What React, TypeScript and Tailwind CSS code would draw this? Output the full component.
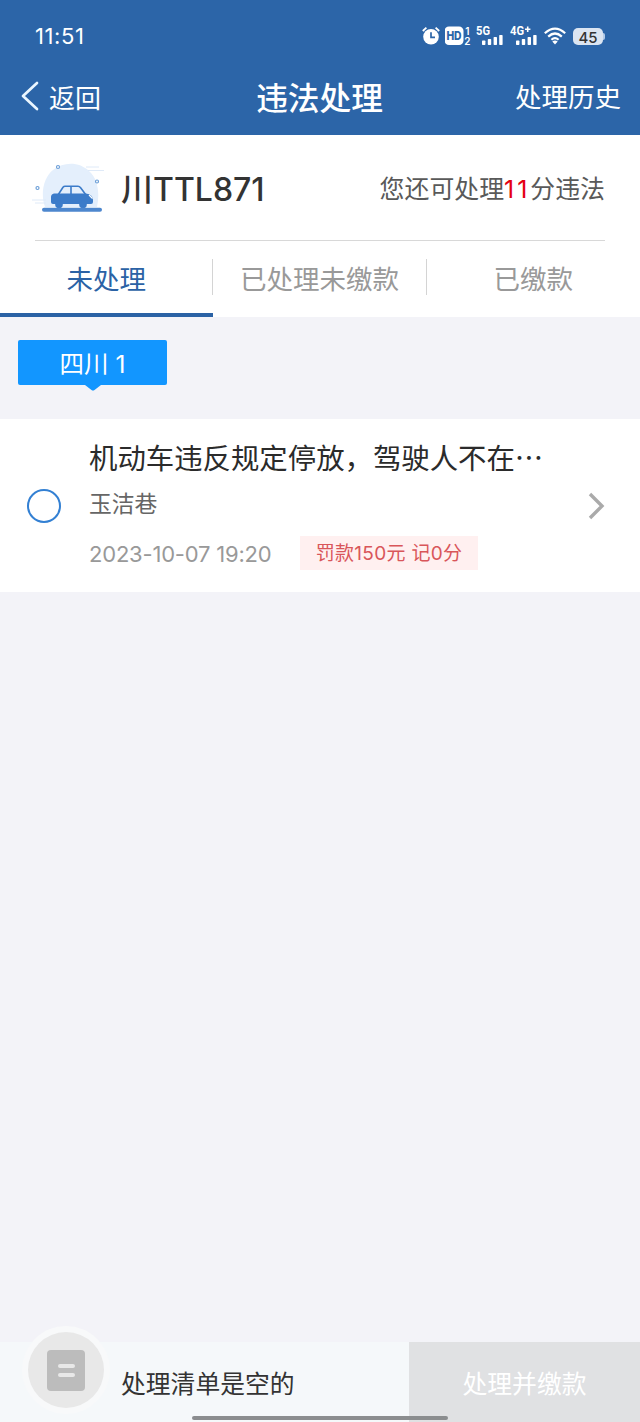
const TABS = [
    { key: "pending", label: "未处理" },
    { key: "unpaid", label: "已处理未缴款" },
    { key: "paid", label: "已缴款" },
]

const SignalIcon = ({ label, plus }: { label: string, plus?: boolean }) => (
    <svg width="28" height="22" viewBox="0 0 28 22" fill="white">
        <text x="0" y="10" fontSize="12" fontWeight="700" textLength="14" lengthAdjust="spacingAndGlyphs" fontFamily="Roboto, sans-serif">{label}</text>
        {plus && <path d="M15 4.2 H20.4 M17.7 1.5 V6.9" stroke="white" strokeWidth="1.6"/>}
        <rect x="6" y="15.5" width="3.4" height="4.5" rx="0.7"/>
        <rect x="11.8" y="14" width="3.4" height="6" rx="0.7"/>
        <rect x="17.6" y="12" width="3.4" height="8" rx="0.7"/>
        <rect x="23.2" y="10" width="3.4" height="10" rx="0.7"/>
    </svg>
)

const StatusBar = () => (
    <div className="h-[72px] px-[35px] flex items-center justify-between text-white">
        <span className="text-[22px] tracking-[0.6px]">11:51</span>
        <div className="flex items-center">
            <svg width="20" height="20" viewBox="0 0 20 20" fill="none" className="mr-[3px]">
                <circle cx="9" cy="10.8" r="7.8" fill="white"/>
                <path d="M0.8 5 L4.4 1.6 M17.2 5 L13.6 1.6" stroke="white" strokeWidth="1.8"/>
                <path d="M9 6.3 V11.3 H13" stroke="#2c65a8" strokeWidth="1.7"/>
            </svg>
            <svg width="27" height="22" viewBox="0 0 27 22" fill="white" className="mr-[4px]">
                <rect x="-0.5" y="1.5" width="19" height="18.5" rx="4.5"/>
                <text x="1.4" y="15.2" fontSize="12" fontWeight="800" textLength="15.2" lengthAdjust="spacingAndGlyphs" fill="#2c65a8" fontFamily="Inter, sans-serif">HD</text>
                <text x="20.2" y="9.5" fontSize="10" fontWeight="600" fontFamily="Inter, sans-serif">1</text>
                <text x="19.2" y="20" fontSize="10" fontWeight="600" fontFamily="Inter, sans-serif">2</text>
            </svg>
            <div className="mr-[6px] flex"><SignalIcon label="5G"/></div>
            <div className="mr-[6px] flex"><SignalIcon label="4G" plus/></div>
            <svg width="22" height="18" viewBox="0 0 22 18" fill="none" stroke="white" strokeWidth="2.2">
                <path d="M0.8 6.2 Q11 -3 21.2 6.2"/>
                <path d="M4.2 9.6 Q11 3.4 17.8 9.6"/>
                <path d="M7.4 12.8 Q11 9.6 14.6 12.8"/>
                <path d="M8.3 14.6 Q11 12.6 13.7 14.6 L11 17.6 Z" fill="white" stroke="none"/>
            </svg>
            <div className="ml-[7px] w-[30px] h-[17px] rounded-[5px] bg-[#dbe5f2] text-[#333] flex items-center justify-center text-[15px] leading-[17px] pt-[2px] font-medium">45</div>
            <div className="w-[2px] h-[7px] rounded-r bg-[#b4cbe8]"/>
        </div>
    </div>
)

const NavBar = () => (
    <div className="h-[63px] pl-[21px] pr-[19px] pb-[11px] grid grid-cols-3 items-center text-white whitespace-nowrap">
        <div className="flex items-center text-[26px]">
            <svg width="19" height="32" viewBox="0 0 19 32" fill="none" stroke="#eaf6ff" strokeWidth="2.7" strokeLinecap="round" strokeLinejoin="round" className="-mt-[4px]">
                <path d="M16 3 L2 16 L16 29"/>
            </svg>
            <span className="ml-[9px]">返回</span>
        </div>
        <div className="text-center text-[31.7px] font-medium -ml-[3px] pt-[2px]">违法处理</div>
        <div className="text-right text-[26.5px]">处理历史</div>
    </div>
)

const CarIcon = () => (
    <svg width="72" height="52" viewBox="0 0 72 52" fill="none">
        <path d="M13 45 C8 31 12 15 21 8 C32 -1 48 0 57 9 C66 17 68 31 65 45 Z" fill="#e4effc"/>
        <path d="M54 5 H67 M56 8.5 H72 M0 38 H14 M3 41 H14" stroke="#dfeaf8"/>
        <g stroke="#6c9fd8" strokeWidth="1.2" fill="white">
            <circle cx="26" cy="5" r="1.5"/>
            <circle cx="5.5" cy="26" r="1.5"/>
            <circle cx="65" cy="19.5" r="1.5"/>
        </g>
        <path d="M26 33 L31 25.3 Q31.8 24.3 33 24.3 H46 Q47.5 24.3 48.6 25.8 L54 33 M39 24.3 V33" stroke="#3b7bc9" strokeWidth="1.6"/>
        <path d="M19 35 Q19 32 22 31.5 H54 Q61 32.5 61 38 V40 Q61 42 59 42 H21 Q19 42 19 40 Z" fill="#3b7bc9"/>
        <path d="M57 33 L60.5 36.5" stroke="white" strokeWidth="1.2"/>
        <circle cx="27" cy="42.5" r="3.8" fill="#3b7bc9"/>
        <circle cx="51" cy="42.5" r="3.8" fill="#3b7bc9"/>
        <rect x="10" y="45.7" width="60" height="4" rx="2" fill="#4d87ce"/>
    </svg>
)

const VehicleInfo = () => (
    <div className="mx-[35px] h-[106px] border-b border-[#d8d8d8] flex items-center justify-between whitespace-nowrap">
        <div className="flex items-center">
            <div className="-ml-[3px]"><CarIcon/></div>
            <span className="ml-[17px] pt-[5px] text-[32px] font-medium text-[#333]">川TTL871</span>
        </div>
        <span className="pt-[4px] text-[24.9px] text-[#595959]">
            您还可处理<span className="text-[#e50012] tracking-[3px]">11</span>分违法
        </span>
    </div>
)

const Tabs = ({ active }: { active: string }) => (
    <div className="relative h-[76px] grid grid-cols-3 text-[26.5px]">
        {TABS.map((tab, i) => (
            <div
                key={tab.key}
                className={`flex flex-col pt-[18px] justify-between ${tab.key === active ? "text-[#2b62a5]" : "text-[#999]"}`}
            >
                <div className={`h-[36px] pt-[5px] flex items-center justify-center border-[#d4d4d4] ${i < TABS.length - 1 ? "border-r" : ""}`}>
                    {tab.label}
                </div>
                {tab.key === active && <div className="h-[4px] bg-[#2b62a5]"/>}
            </div>
        ))}
    </div>
)

const ViolationCard = () => (
    <div className="h-[173px] bg-white flex items-center pl-[27px] pr-[35px]">
        <div className="size-[34px] shrink-0 rounded-full border-2 border-[#3380d3]"/>
        <div className="ml-[28px] flex-1 min-w-0 h-full pt-[22px] flex flex-col whitespace-nowrap">
            <div className="h-[36px] leading-[36px] text-[28.4px] text-[#2b2b2b]">机动车违反规定停放，驾驶人不在⋯</div>
            <div className="mt-[9px] h-[36px] leading-[36px] text-[22.8px] text-[#666]">玉洁巷</div>
            <div className="mt-[14px] h-[34px] flex items-center">
                <span className="w-[211px] pt-[2px] text-[22px] tracking-[-0.2px] text-[#999]">2023-10-07 19:20</span>
                <span className="w-[178px] h-[34px] pt-[3px] bg-[#fff0f0] text-[#d9565a] text-[19px] tracking-[0.3px] flex items-center justify-center">罚款150元 记0分</span>
            </div>
        </div>
        <svg width="17" height="28" viewBox="0 0 17 28" fill="none" stroke="#aaa" strokeWidth="3.4">
            <path d="M2 2 L14 14 L2 26"/>
        </svg>
    </div>
)

const BottomBar = () => (
    <div className="relative h-[80px] bg-[#f5f8fa] flex whitespace-nowrap">
        <div className="absolute left-[22px] -top-[16px] size-[88px] rounded-full bg-[#f8f9fa] flex items-center justify-center">
            <div className="size-[76px] rounded-full bg-[#e8e8e8] flex items-center justify-center">
                <div className="w-[38px] h-[41px] rounded-[4px] bg-[#bcbcbc] flex flex-col items-center justify-center gap-[5px]">
                    <div className="w-[17px] h-[4px] rounded-sm bg-[#e8e8e8]"/>
                    <div className="w-[17px] h-[4px] rounded-sm bg-[#e8e8e8]"/>
                </div>
            </div>
        </div>
        <div className="w-[409px] pl-[121px] pt-[5px] flex items-center text-[24.8px] text-[#333]">处理清单是空的</div>
        <div className="flex-1 pt-[5px] bg-[#e0e1e3] flex items-center justify-center text-[24.8px] text-white">处理并缴款</div>
        <div className="absolute left-[192px] bottom-[2px] w-[256px] h-[4px] rounded-full bg-[#8b8d8f]"/>
    </div>
)

export default function App() {
    return (
        <div className="w-[640px] h-[1422px] flex flex-col overflow-hidden bg-[#f3f3f8] font-['Inter','Noto_Sans_CJK_SC',sans-serif]">
            <header className="bg-[#2c65a8]">
                <StatusBar/>
                <NavBar/>
            </header>
            <section className="bg-white">
                <VehicleInfo/>
                <Tabs active="pending"/>
            </section>
            <main className="flex-1">
                <div className="h-[102px] pl-[18px] pt-[23px]">
                    <div className="relative w-[149px] h-[45px] pt-[4px] rounded-[2px] bg-[#1296ff] text-white text-[24.5px] flex items-center justify-center">
                        四川 1
                        <svg width="16" height="6" viewBox="0 0 16 6" className="absolute left-[67px] top-[45px]">
                            <path d="M0 0 H16 L9.5 5 Q8 6 6.5 5 Z" fill="#1296ff"/>
                        </svg>
                    </div>
                </div>
                <ViolationCard/>
            </main>
            <BottomBar/>
        </div>
    )
}
